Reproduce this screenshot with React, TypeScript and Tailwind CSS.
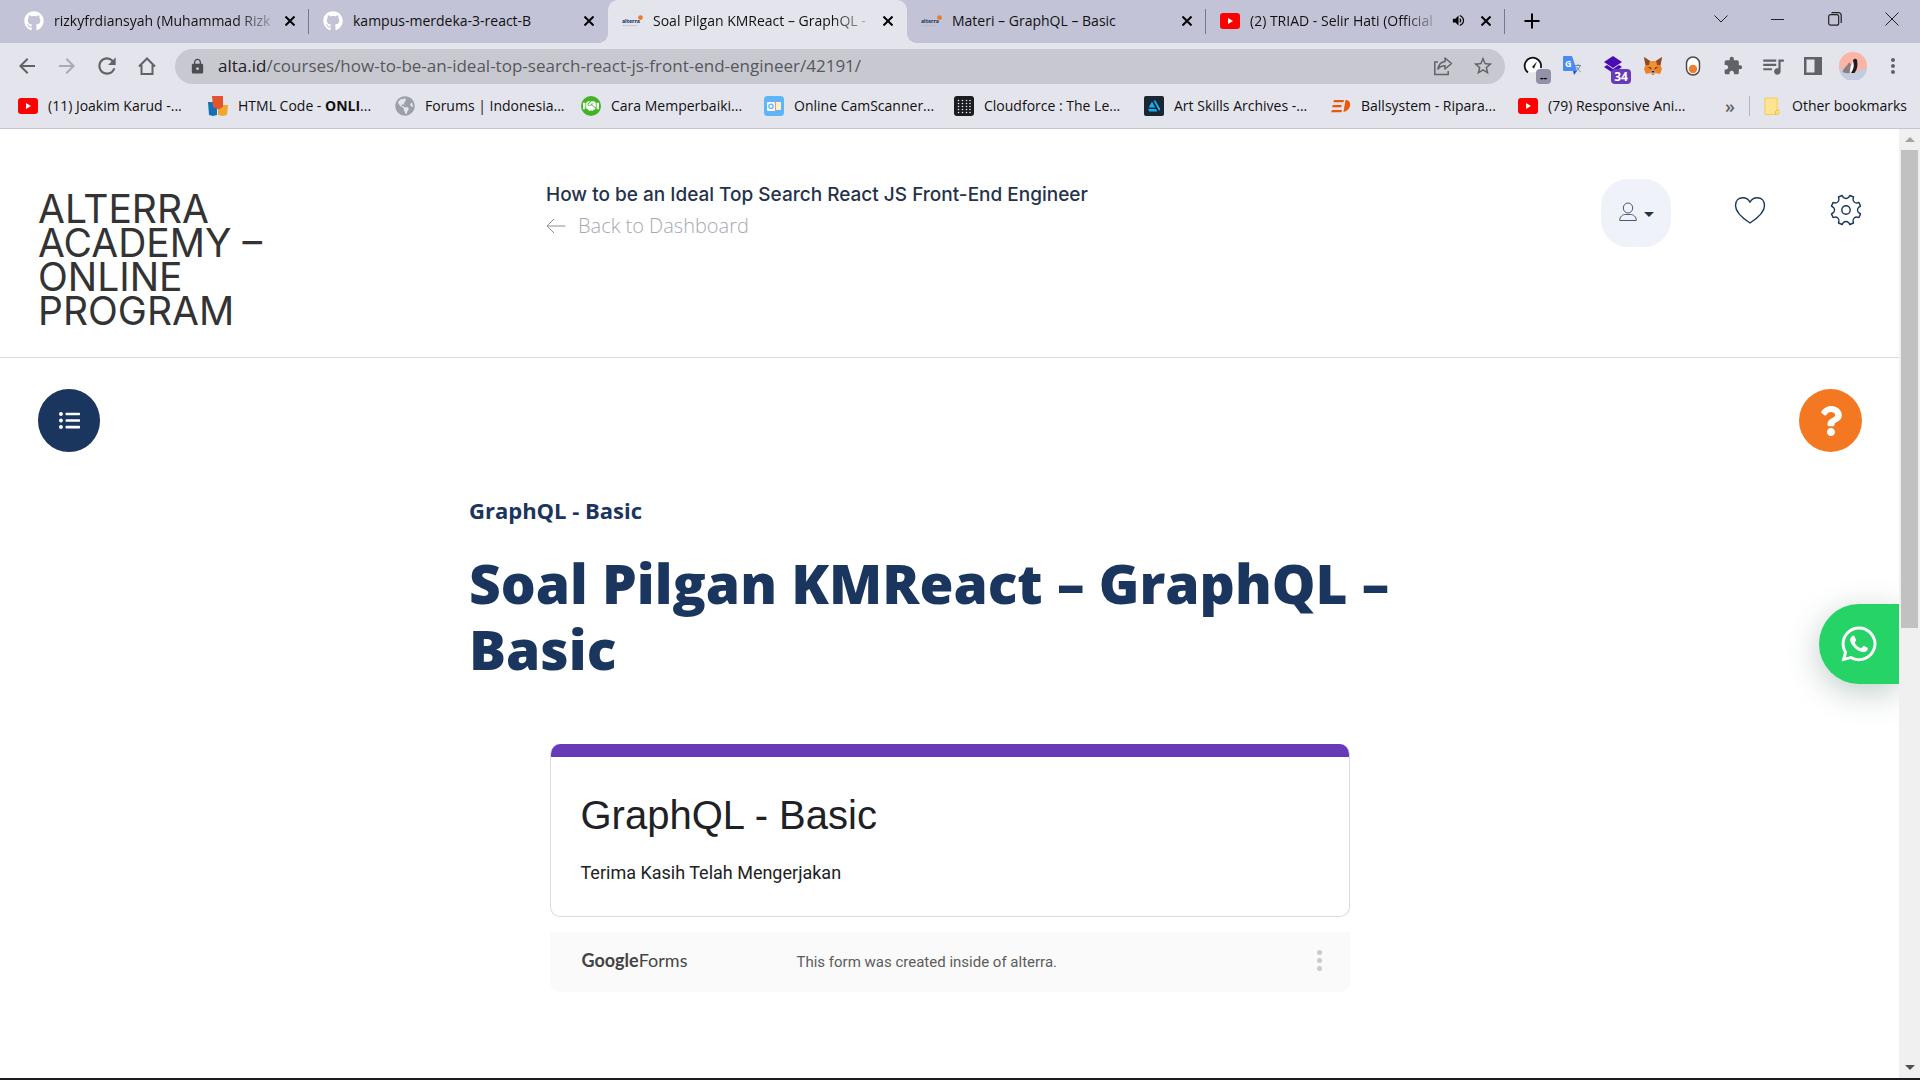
import type { ReactNode } from "react";
import { FaGithub, FaListUl, FaQuestion, FaWhatsapp, FaGlobeAmericas, FaHandshake } from "react-icons/fa";
import { MdArrowBack, MdArrowForward, MdRefresh, MdExtension, MdLock, MdMoreVert, MdStarBorder, MdVolumeUp, MdQueueMusic } from "react-icons/md";

/* ---------- small drawings ---------- */

function YouTubeIcon() {
  return (
    <svg viewBox="0 0 20 16" className="h-4 w-5 shrink-0" aria-hidden="true">
      <rect width="20" height="16" rx="3" fill="#ff0000" />
      <path d="M8 5l5 3-5 3z" fill="#fff" />
    </svg>
  );
}

function AlterraIcon() {
  return (
    <svg viewBox="0 0 21 20" className="h-5 w-[21px] shrink-0" aria-hidden="true">
      <text x="0" y="12" fontSize="5" fontWeight="800" fill="#31456a">alterra</text>
      <path d="M1 14.600h14" stroke="#a9b2c4" strokeWidth="1" strokeDasharray="1 .7" />
      <circle cx="18.500" cy="6.600" r="2.400" fill="#f47722" />
    </svg>
  );
}

function HtmlCodeIcon() {
  return (
    <svg viewBox="0 0 20 20" className="size-5 shrink-0" aria-hidden="true">
      <path d="M0 6h9v13l-4 1-4-1z" fill="#1172b8" />
      <path d="M10 9h10l-1 10-4.500 1-4.500-1z" fill="#f0a62f" />
      <path d="M4 0h11v11l-4.500 2.500L5 11z" fill="#e5532d" />
    </svg>
  );
}

function ScannerIcon() {
  return (
    <svg viewBox="0 0 20 20" className="size-5 shrink-0" aria-hidden="true">
      <rect width="20" height="20" rx="3.500" fill="#5db4f7" />
      <rect x="3" y="6" width="8" height="9" rx="1" fill="#fff" />
      <circle cx="7" cy="10.300" r="2.200" fill="none" stroke="#5db4f7" strokeWidth="1.300" />
      <path d="M12 6h5v8h-5z" fill="#fdf0c8" />
      <path d="M11.500 5v11" stroke="#f08a7a" strokeWidth="1" />
    </svg>
  );
}

function DotsGridIcon() {
  return (
    <svg viewBox="0 0 20 20" className="size-5 shrink-0" aria-hidden="true">
      <rect width="20" height="20" rx="3" fill="#1b1c22" />
      {[4.5, 7.5, 10.5, 13.5, 16.5].map((y) =>
        [4.5, 8.5, 12.5, 16].map((x) => <circle key={`${x}-${y}`} cx={x} cy={y} r="0.800" fill="#e8e8ea" />)
      )}
    </svg>
  );
}

function ArtStationIcon() {
  return (
    <svg viewBox="0 0 20 20" className="size-5 shrink-0" aria-hidden="true">
      <rect width="20" height="20" rx="2" fill="#1a2733" />
      <path d="M4 13h8l1.400 2.500H5.300zM8 5.500L11.300 11.500H4.700zM9.500 4.500h2l4.800 8.500-1.200 2z" fill="#13aff0" />
    </svg>
  );
}

function BallsystemIcon() {
  return (
    <svg viewBox="0 0 20 20" className="size-5 shrink-0" aria-hidden="true">
      <path d="M3 4h10l-.6 2.200H2.400zM1.800 9h9l-.6 2.200h-9zM1 14h10l-.6 2.200H.2z" fill="#e8590c" />
      <path d="M14.500 4c7 0 6 10-2 12z" fill="#e8590c" />
    </svg>
  );
}

function FolderIcon() {
  return (
    <svg viewBox="0 0 17 20" className="h-5 w-4 shrink-0" aria-hidden="true">
      <path d="M1 1.500h13v12l2 1v4l-3 .500H1z" fill="#ffe591" stroke="#f2cb4e" strokeWidth="1" />
      <path d="M12.500 19v-3.500l2-1.500" fill="none" stroke="#e0b02c" />
    </svg>
  );
}

function HandshakeIcon() {
  return (
    <span className="flex size-5 shrink-0 items-center justify-center rounded-full bg-[#42b324] text-white">
      <FaHandshake size={16} />
    </span>
  );
}

function ShareIcon() {
  return (
    <svg viewBox="0 0 20 20" className="size-5" fill="none" stroke="#5f6368" strokeWidth="1.500" aria-hidden="true">
      <path d="M5 6H1.800v12.500h13.400V15" />
      <path d="M12 2l6.500 5.500-6.500 5.500v-3.200c-3.500 0-5.500 1-7 3.400.500-4 3-7.200 7-7.700z" strokeLinejoin="round" />
    </svg>
  );
}

function HomeIcon() {
  return (
    <svg viewBox="0 0 20 20" className="size-5" fill="none" stroke="#5f6368" strokeWidth="2" aria-hidden="true">
      <path d="M2 10.500l8-8 8 8M4.500 9v9h11V9" />
    </svg>
  );
}

function GaugeIcon() {
  return (
    <svg viewBox="0 0 20 20" className="size-5" aria-hidden="true">
      <path d="M5 16.500A8.200 8.200 0 1 1 16 16z" fill="#fff" />
      <path d="M5 16.500A8.200 8.200 0 1 1 17.800 12" fill="none" stroke="#111" strokeWidth="1.800" />
      <path d="M9 11l5-5.500L11 12.500z" fill="#111" />
    </svg>
  );
}

function TranslateIcon() {
  return (
    <svg viewBox="0 0 20 20" className="size-5" aria-hidden="true">
      <path d="M8 4h11v15h-7z" fill="#dfe3e8" />
      <path d="M12 9.500h6M15 8v1.500M17 9.500c-.8 3-2.500 4.800-4.500 6M13.500 11c1 2 2.400 3.500 4 4.500" stroke="#6b8ba5" strokeWidth="1" fill="none" />
      <path d="M1 0h8l5 15H1a1 1 0 0 1-1-1V1a1 1 0 0 1 1-1z" fill="#4a8af4" />
      <path d="M10 15h4l-3 4z" fill="#2a56c6" />
      <text x="2" y="11" fontSize="9" fontWeight="700" fill="#fff">G</text>
    </svg>
  );
}

function StackIcon() {
  return (
    <svg viewBox="0 0 20 20" className="size-5" aria-hidden="true">
      <path d="M10 0l9 6-9 6-9-6z" fill="#4a0bb5" />
      <path d="M1 11l3-2 6 4 6-4 3 2-9 6z" fill="#4a0bb5" />
    </svg>
  );
}

function FoxIcon() {
  return (
    <svg viewBox="0 0 20 20" className="size-5" aria-hidden="true">
      <path d="M1 1l6 4h6l6-4-1.500 8 1.500 4-2 5-4.500-1-1.500 2H9l-1.500-2L3 18l-2-5 1.500-4z" fill="#ee8125" />
      <path d="M1 1l6 4-1 4-3.500 0zM19 1l-6 4 1 4 3.500 0z" fill="#8a4a2c" />
      <path d="M7 5h6l1 5-3 3H9l-3-3z" fill="#f28f2f" />
      <path d="M5 11l3 .500.300 2zM15 11l-3 .500-.3 2z" fill="#243447" />
      <path d="M7.500 16l1-1.500h3l1 1.500-1 2h-3z" fill="#c9b8ab" />
      <path d="M8.800 15h2.400v1.500H8.800z" fill="#1d1d1d" />
    </svg>
  );
}

function CapsuleIcon() {
  return (
    <svg viewBox="0 0 20 20" className="size-5" aria-hidden="true">
      <rect x="3.500" y="1" width="13" height="18" rx="6.500" fill="#fff" stroke="#4c4c4c" strokeWidth="1.500" />
      <circle cx="10" cy="13" r="4.200" fill="#ef7d2d" />
    </svg>
  );
}

function SidePanelIcon() {
  return (
    <svg viewBox="0 0 20 20" className="size-5" aria-hidden="true">
      <path d="M1 1h18v18H1zM3.500 3.500v13h8v-13z" fill="#5f6368" fillRule="evenodd" />
    </svg>
  );
}

function Avatar() {
  return (
    <svg viewBox="0 0 28 28" className="size-7" aria-hidden="true">
      <circle cx="14" cy="14" r="14" fill="#fbb4a6" />
      <path d="M0 15C5 18 10 19.500 14 19.500s9-1 14-4.500a14 14 0 0 1-28 0z" fill="#c3cbdf" />
      <path d="M3.500 20c1-4 4.500-6 6.500-9.500l2 1.500-1.500 9c-3 .500-5 0-7-1z" fill="#86807f" />
      <path d="M14 8.500c1-2.500 4-2.200 4.200.3C19 14 18 18 15.500 21H12c3-4 3.500-7.500 2-12.500z" fill="#1d1d22" />
      <path d="M14 10c1 4 0 8-2.500 11-1-4 .5-7.500 2.500-11z" fill="#fff" />
    </svg>
  );
}

function TabCloseIcon() {
  return (
    <svg viewBox="0 0 10 10" className="size-2.5" stroke="#000" strokeWidth="2" aria-hidden="true">
      <path d="M0.500 0.500l9 9M9.500 0.500l-9 9" />
    </svg>
  );
}

/* Outline of a cog: eight scallops cut into a circle. */
const point = (radius: number, degrees: number) => {
  const a = ((degrees - 90) * Math.PI) / 180;
  return `${(16 + radius * Math.cos(a)).toFixed(2)} ${(16 + radius * Math.sin(a)).toFixed(2)}`;
};
const cogPath =
  [0, 1, 2, 3, 4, 5, 6, 7]
    .map((k) => `${k === 0 ? "M" : "L"}${point(15, k * 45 - 15)}L${point(13, k * 45 - 12)}A3.6 3.6 0 0 0 ${point(13, k * 45 + 12)}L${point(15, k * 45 + 15)}`)
    .join("") + "Z";

function CogIcon() {
  return (
    <svg viewBox="0 0 32 32" className="size-8" fill="none" stroke="#1a355e" strokeWidth="1.400" strokeLinejoin="round" aria-hidden="true">
      <path d={cogPath} />
      <circle cx="16" cy="16" r="4.200" />
    </svg>
  );
}

function HeartIcon() {
  return (
    <svg viewBox="0 0 32 32" className="size-8" fill="none" stroke="#1a355e" strokeWidth="1.400" strokeLinejoin="round" aria-hidden="true">
      <path d="M16 29C9 24.500 1.500 19 1.500 11.500 1.500 6.500 4.700 3.700 8.800 3.700c3.200 0 5.800 1.800 7.200 4.500 1.400-2.700 4-4.500 7.200-4.500 4.100 0 7.300 2.800 7.300 7.800C30.500 19 23 24.500 16 29z" />
    </svg>
  );
}

function PersonIcon() {
  return (
    <svg viewBox="0 0 20 20" className="size-5" fill="none" stroke="#4a5875" strokeWidth="1" strokeLinejoin="round" aria-hidden="true">
      <ellipse cx="10" cy="6" rx="4.700" ry="5" />
      <path d="M1.700 18.500c0-4 3-6 5.500-6h5.600c2.500 0 5.500 2 5.500 6z" />
    </svg>
  );
}

function ThinArrowIcon() {
  return (
    <svg viewBox="0 0 20 16" className="h-4 w-5" fill="none" stroke="#8b9099" strokeWidth="1" aria-hidden="true">
      <path d="M19.500 8H1M8 1L1 8l7 7" />
    </svg>
  );
}

/* ---------- browser chrome ---------- */

const tabs: { title: string; icon: ReactNode; active?: boolean; divider?: boolean; fade?: boolean; sound?: boolean }[] = [
  { title: "rizkyfrdiansyah (Muhammad Rizk", icon: <FaGithub size={20} className="shrink-0 text-white" />, divider: true, fade: true },
  { title: "kampus-merdeka-3-react-B", icon: <FaGithub size={20} className="shrink-0 text-white" /> },
  { title: "Soal Pilgan KMReact – GraphQL -", icon: <AlterraIcon />, active: true, fade: true },
  { title: "Materi – GraphQL – Basic", icon: <AlterraIcon />, divider: true },
  { title: "(2) TRIAD - Selir Hati (Official", icon: <YouTubeIcon />, divider: true, fade: true, sound: true },
];

function TabStrip() {
  return (
    <div className="flex h-[43px] items-stretch bg-[#c3c3d7] pl-[10px]">
      <div role="tablist" className="flex min-w-0">
        {tabs.map((tab) => (
          <div
            key={tab.title}
            role="tab"
            aria-selected={!!tab.active}
            className={
              tab.active
                ? "relative flex w-[299px] items-center rounded-t-[10px] bg-[#e4e4ed] pr-[9px] pb-0.5 pl-3.5"
                : "relative flex w-[299px] items-center pr-[9px] pb-0.5 pl-3.5"
            }
          >
            {tab.active && (
              <>
                <span className="absolute bottom-0 -left-2.5 size-2.5 bg-[radial-gradient(circle_at_0_0,transparent_10px,#e4e4ed_10px)]" />
                <span className="absolute -right-2.5 bottom-0 size-2.5 bg-[radial-gradient(circle_at_100%_0,transparent_10px,#e4e4ed_10px)]" />
              </>
            )}
            {tab.icon}
            <span
              className={
                tab.fade
                  ? "ml-2.5 text-[14px] whitespace-nowrap text-[#111] [mask-image:linear-gradient(to_right,#000_84%,rgba(0,0,0,0.25))]"
                  : "ml-2.5 text-[14px] whitespace-nowrap text-[#111]"
              }
            >
              {tab.title}
            </span>
            <span className="ml-auto flex shrink-0 items-center">
              {tab.sound && <MdVolumeUp size={15} className="mr-2.5" />}
              <button type="button" aria-label={`Close ${tab.title}`} className="flex size-5 items-center justify-center">
                <TabCloseIcon />
              </button>
            </span>
            {tab.divider && <span className="absolute top-[9px] right-0 h-[25px] w-px bg-[#77778a]" />}
          </div>
        ))}
      </div>
      <button type="button" aria-label="New tab" className="ml-[7px] flex w-10 items-center justify-center pb-0.5">
        <svg viewBox="0 0 16 16" className="size-4" stroke="#000" strokeWidth="2" aria-hidden="true">
          <path d="M8 0.500v15M0.500 8h15" />
        </svg>
      </button>
      <div className="ml-auto flex h-[38px]">
        <button type="button" aria-label="Search tabs" className="flex w-[57px] items-center justify-center">
          <svg viewBox="0 0 14 8" className="h-2 w-3.5" fill="none" stroke="#222" aria-hidden="true">
            <path d="M0.500 0.500L7 7l6.500-6.500" />
          </svg>
        </button>
        <button type="button" aria-label="Minimize" className="flex w-[57px] items-center justify-center">
          <span className="h-px w-[13px] bg-[#222]" />
        </button>
        <button type="button" aria-label="Restore" className="flex w-[57px] items-center justify-center">
          <svg viewBox="0 0 14 14" className="size-3.5" fill="none" stroke="#222" strokeWidth="1.200" aria-hidden="true">
            <rect x="0.700" y="2.700" width="10" height="10.500" rx="2" />
            <path d="M3.500 0.700h7a2.700 2.700 0 0 1 2.700 2.700v7.600" />
          </svg>
        </button>
        <button type="button" aria-label="Close window" className="flex w-[57px] items-center justify-center">
          <svg viewBox="0 0 14 14" className="size-3.5" stroke="#222" aria-hidden="true">
            <path d="M0.500 0.500l13 13M13.500 0.500l-13 13" />
          </svg>
        </button>
      </div>
    </div>
  );
}

function ToolButton({ label, children }: { label: string; children: ReactNode }) {
  return (
    <button type="button" aria-label={label} className="relative flex h-9 w-10 shrink-0 items-center justify-center text-[#5f6368]">
      {children}
    </button>
  );
}

function Toolbar() {
  return (
    <div className="flex items-center bg-[#e4e4ed] px-[7px] pt-[5px]">
      <ToolButton label="Back"><MdArrowBack size={24} /></ToolButton>
      <ToolButton label="Forward"><MdArrowForward size={24} className="text-[#a9abb2]" /></ToolButton>
      <ToolButton label="Reload"><MdRefresh size={26} /></ToolButton>
      <ToolButton label="Home"><HomeIcon /></ToolButton>
      <div className="ml-2 flex h-[35px] flex-1 items-center rounded-full bg-[#c8c8d0] pr-0.5 pl-3.5">
        <MdLock size={17} className="shrink-0 text-[#4a4d52]" />
        <div className="relative ml-3 flex-1">
          <div aria-hidden="true" className="text-[17px] leading-6 whitespace-nowrap text-[#55585d]">
            <span className="text-[#1f2023]">alta.id</span>/courses/how-to-be-an-ideal-top-search-react-js-front-end-engineer/42191/
          </div>
          <input
            aria-label="Address"
            defaultValue="alta.id/courses/how-to-be-an-ideal-top-search-react-js-front-end-engineer/42191/"
            className="absolute inset-0 w-full bg-transparent text-[17px] leading-6 text-transparent outline-none"
          />
        </div>
        <ToolButton label="Share this page"><ShareIcon /></ToolButton>
        <ToolButton label="Bookmark this tab"><MdStarBorder size={22} /></ToolButton>
      </div>
      <div className="ml-2 flex">
        <ToolButton label="Speed meter">
          <GaugeIcon />
          <span className="absolute right-0.5 bottom-0 h-[15px] w-[15px] rounded-sm bg-[#9191a8] text-center text-[11px] leading-[15px] font-bold text-black">--</span>
        </ToolButton>
        <ToolButton label="Translate"><TranslateIcon /></ToolButton>
        <ToolButton label="Stack">
          <StackIcon />
          <span className="absolute right-0.5 bottom-0 h-[15px] w-5 rounded-sm bg-[#673ab7] text-center text-[12px] leading-[15px] font-bold text-white">34</span>
        </ToolButton>
        <ToolButton label="Wallet"><FoxIcon /></ToolButton>
        <ToolButton label="Capsule"><CapsuleIcon /></ToolButton>
        <ToolButton label="Extensions"><MdExtension size={20} /></ToolButton>
        <ToolButton label="Media controls"><MdQueueMusic size={26} /></ToolButton>
        <ToolButton label="Side panel"><SidePanelIcon /></ToolButton>
        <ToolButton label="Profile"><Avatar /></ToolButton>
        <ToolButton label="Menu"><MdMoreVert size={24} /></ToolButton>
      </div>
    </div>
  );
}

const bookmarks: { label: ReactNode; id: string; icon: ReactNode; width: string }[] = [
  { id: "karud", label: "(11) Joakim Karud -...", icon: <YouTubeIcon />, width: "w-[190px]" },
  { id: "html", label: <>HTML Code - <b className="font-bold">ONLI</b>...</>, icon: <HtmlCodeIcon />, width: "w-[187px]" },
  { id: "forums", label: "Forums | Indonesia...", icon: <FaGlobeAmericas size={20} className="shrink-0 text-[#9aa0a6]" />, width: "w-[186px]" },
  { id: "cara", label: "Cara Memperbaiki...", icon: <HandshakeIcon />, width: "w-[183px]" },
  { id: "cam", label: "Online CamScanner...", icon: <ScannerIcon />, width: "w-[190px]" },
  { id: "cloud", label: "Cloudforce : The Le...", icon: <DotsGridIcon />, width: "w-[190px]" },
  { id: "art", label: "Art Skills Archives -...", icon: <ArtStationIcon />, width: "w-[187px]" },
  { id: "ball", label: "Ballsystem - Ripara...", icon: <BallsystemIcon />, width: "w-[187px]" },
  { id: "resp", label: "(79) Responsive Ani...", icon: <YouTubeIcon />, width: "w-[187px]" },
];

function BookmarksBar() {
  return (
    <nav aria-label="Bookmarks" className="flex h-[45px] items-center border-b border-[#c3c3d2] bg-[#e4e4ed] pr-[13px] pb-px pl-[18px] text-[14px] text-[#111]">
      {bookmarks.map((b) => (
        <a key={b.id} href="#" className={`flex shrink-0 items-center gap-2.5 whitespace-nowrap ${b.width}`}>
          {b.icon}
          <span>{b.label}</span>
        </a>
      ))}
      <div className="ml-auto flex items-center">
        <button type="button" aria-label="More bookmarks" className="mr-3.5 text-[18px] leading-5 font-semibold text-[#5f6368]">»</button>
        <span className="h-5 w-px bg-[#b5b5c3]" />
        <a href="#" className="ml-3.5 flex items-center gap-3 whitespace-nowrap">
          <FolderIcon />
          Other bookmarks
        </a>
      </div>
    </nav>
  );
}

function Scrollbar() {
  return (
    <div aria-hidden="true" className="flex w-[21px] shrink-0 flex-col items-center bg-[#f0f0f0]">
      <span className="flex h-[21px] items-center justify-center">
        <svg viewBox="0 0 10 5" className="h-[5px] w-2.5"><path d="M0 5l5-5 5 5z" fill="#a3a3a3" /></svg>
      </span>
      <span className="h-[478px] w-[17px] bg-[#c1c1c1]" />
      <span className="mt-auto flex h-[21px] items-center justify-center">
        <svg viewBox="0 0 10 5" className="h-[5px] w-2.5"><path d="M0 0l5 5 5-5z" fill="#505050" /></svg>
      </span>
    </div>
  );
}

/* ---------- course page ---------- */

function CourseHeader() {
  return (
    <header className="flex h-[229px] items-start border-b border-[#d9dcdf] pr-[37px] pl-[38px]">
      <div className="mt-[63px] w-[508px] shrink-0">
        <a href="#" className="block w-[240px] font-['Inter',sans-serif] text-[39px] leading-[34px] text-[#333]">
          ALTERRA ACADEMY – ONLINE PROGRAM
        </a>
      </div>
      <div className="mt-[50px]">
        <h2 className="font-['Inter',sans-serif] text-[19px] leading-8 font-medium text-[#25324b]">
          How to be an Ideal Top Search React JS Front-End Engineer
        </h2>
        <a href="#" className="flex items-center gap-3 text-[20px] leading-[30px] font-light text-[#a5a9b2]">
          <ThinArrowIcon />
          Back to Dashboard
        </a>
      </div>
      <div className="mt-[50px] ml-auto flex items-start">
        <button type="button" aria-label="Account" className="flex h-[68px] w-[70px] items-center justify-center gap-1.5 rounded-[27px] bg-[#eff2f9] pb-0.5">
          <PersonIcon />
          <svg viewBox="0 0 10 5" className="mt-1 h-[5px] w-2.5" aria-hidden="true"><path d="M0 0h10L5 5z" fill="#25324b" /></svg>
        </button>
        <button type="button" aria-label="Favourites" className="mt-[15px] ml-[63px]"><HeartIcon /></button>
        <button type="button" aria-label="Settings" className="mt-[15px] ml-16"><CogIcon /></button>
      </div>
    </header>
  );
}

function FormCard() {
  return (
    <section className="mx-auto mt-[62px] w-full max-w-[800px]">
      <div className="overflow-hidden rounded-[10px] border border-t-0 border-[#dadce0]">
        <div className="-mx-px h-[13px] bg-[#673ab7]" />
        <div className="px-[30px] pt-[33px] pb-[30px] text-[#202124]">
          <h3 className="font-['Liberation_Sans',sans-serif] text-[40px] leading-[50px]">GraphQL - Basic</h3>
          <p className="mt-5 font-['Roboto',sans-serif] text-[18px] leading-[26px]">Terima Kasih Telah Mengerjakan</p>
        </div>
      </div>
      <footer className="mt-[15px] flex h-[60px] items-center rounded-b-[10px] bg-[#fafafa] pr-5 pl-8">
        <span className="w-[215px] pb-1 font-['Lato',sans-serif] text-[18px] text-[#444]">
          <b className="font-bold">Google</b>Forms
        </span>
        <span className="font-['Roboto',sans-serif] text-[15px] text-[#5c5c5c]">This form was created inside of alterra.</span>
        <button type="button" aria-label="Form options" className="ml-auto flex w-5 flex-col items-center gap-[3px] pb-1">
          <span className="size-[5px] rounded-full bg-[#cacaca]" />
          <span className="size-[5px] rounded-full bg-[#cacaca]" />
          <span className="size-[5px] rounded-full bg-[#cacaca]" />
        </button>
      </footer>
    </section>
  );
}

export default function App() {
  return (
    <div className="flex h-screen flex-col overflow-hidden border-b-2 border-[#1c1c1e] bg-white font-['Open_Sans','Noto_Sans',sans-serif]">
      <TabStrip />
      <Toolbar />
      <BookmarksBar />
      <div className="flex min-h-0 flex-1">
        <div className="relative flex-1 overflow-hidden">
          <CourseHeader />
          <div className="flex justify-between pt-[31px] pr-[37px] pl-[38px]">
            <button type="button" aria-label="Course contents" className="flex h-[63px] w-[62px] items-center justify-center rounded-full bg-[#1a355e] text-white">
              <FaListUl size={21} />
            </button>
            <button type="button" aria-label="Help" className="flex size-[63px] items-center justify-center rounded-full bg-[#f47722] text-white">
              <FaQuestion size={30} />
            </button>
          </div>
          <main className="mx-auto mt-10 max-w-[961px]">
            <p className="text-[22px] leading-9 font-bold text-[#1a355e]">GraphQL - Basic</p>
            <h1 className="mt-[22px] text-[55px] leading-[66px] font-extrabold text-[#1a355e]">Soal Pilgan KMReact – GraphQL – Basic</h1>
            <FormCard />
          </main>
          <a href="#" aria-label="WhatsApp" className="absolute top-[475px] right-0 flex size-20 items-center justify-center rounded-l-full bg-[#25d366] text-white shadow-[0_8px_32px_rgba(24,76,60,0.28)]">
            <FaWhatsapp size={40} />
          </a>
        </div>
        <Scrollbar />
      </div>
    </div>
  );
}
